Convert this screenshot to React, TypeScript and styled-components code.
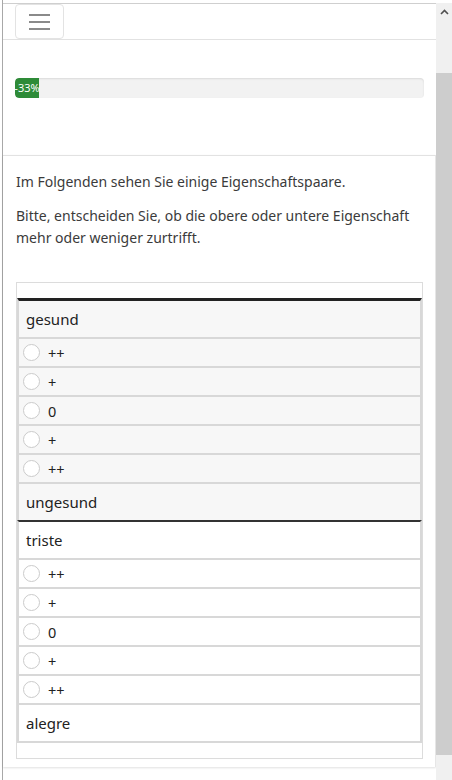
import React from "react";
import styled, { createGlobalStyle } from "styled-components";

const GlobalStyle = createGlobalStyle`
  html, body {
    margin: 0;
    padding: 0;
    background: #fff;
  }
  body {
    font-family: "Noto Sans", "Open Sans", sans-serif;
    color: #333;
  }
`;

const Page = styled.div`
  display: flex;
  height: 780px;
  overflow: hidden;
  padding-left: 2px;
  padding-top: 3px;
  box-sizing: border-box;
`;

const Frame = styled.div`
  flex: 1;
  display: flex;
  border-left: 1px solid #a8a8a8;
  margin-top: -3px;
  padding-top: 3px;
`;

const Main = styled.div`
  flex: 1;
  display: flex;
  flex-direction: column;
  border-top: 1px solid #cfcfcf;
  min-width: 0;
`;

const Header = styled.div`
  height: 35px;
  display: flex;
  align-items: flex-start;
  padding-left: 12px;
  border-bottom: 1px solid #e2e2e2;
`;

const MenuButton = styled.button`
  width: 49px;
  height: 35px;
  margin: 0;
  padding: 0;
  border: 1px solid #e3e3e3;
  border-radius: 4px;
  background: #fff;
  display: flex;
  flex-direction: column;
  align-items: center;
  justify-content: center;
  gap: 5px;
`;

const MenuLine = styled.span`
  display: block;
  width: 21px;
  height: 2px;
  background: #8a8a8a;
`;

const ProgressSection = styled.div`
  height: 115px;
  padding: 38px 12px 0 12px;
  box-sizing: border-box;
`;

const ProgressTrack = styled.div`
  height: 20px;
  background: #f2f2f2;
  border-radius: 4px;
  box-shadow: inset 0 1px 2px rgba(0, 0, 0, 0.1);
  display: flex;
  overflow: hidden;
`;

const ProgressFill = styled.div`
  background: #2e8b38;
  color: #fff;
  font-size: 11px;
  line-height: 20px;
  display: flex;
  justify-content: center;
  white-space: nowrap;
  border-radius: 4px 0 0 4px;
`;

const Card = styled.div`
  flex: 1;
  border-top: 1px solid #e2e2e2;
  border-right: 1px solid #e6e6e6;
  padding: 15px 12px 0 13px;
  margin-bottom: 13px;
  box-shadow: 0 1px 2px rgba(0, 0, 0, 0.12);
`;

const Paragraph = styled.p`
  margin: 0 0 12px 0;
  font-size: 14px;
  line-height: 22px;
  color: #3b3b3b;
`;

const TableBox = styled.div`
  margin-top: 33px;
  border: 1px solid #dcdcdc;
  padding: 15px 0;
`;

const Block = styled.div<{ $top: number; $shaded: boolean; $last?: boolean }>`
  border-top: ${(p) => p.$top}px solid ${(p) => (p.$top > 2 ? "#222" : "#333")};
  border-left: 2px solid #d8d8d8;
  border-right: 2px solid #d8d8d8;
  border-bottom: ${(p) => (p.$last ? "2px solid #d8d8d8" : "none")};
  background: ${(p) => (p.$shaded ? "#f7f7f7" : "#fff")};
`;

const Pole = styled.div<{ $sep?: boolean }>`
  height: 36px;
  display: flex;
  align-items: center;
  padding-left: 7px;
  font-size: 15px;
  color: #222;
  border-bottom: ${(p) => (p.$sep ? "2px solid #d8d8d8" : "none")};
`;

const Option = styled.label`
  height: 27px;
  display: flex;
  align-items: center;
  gap: 8px;
  padding-left: 4px;
  font-size: 14.5px;
  color: #222;
  border-bottom: 2px solid #d8d8d8;
`;

const Radio = styled.span`
  width: 15px;
  height: 15px;
  border: 1px solid #cbcbcb;
  border-radius: 50%;
  background: #fff;
`;

const Scrollbar = styled.div`
  width: 16px;
  display: flex;
  flex-direction: column;
  background: #f0f0f0;
`;

const ScrollArrow = styled.div`
  height: 17px;
  display: flex;
  align-items: center;
  justify-content: center;
`;

const ScrollTrack = styled.div`
  height: 53px;
`;

const ScrollThumb = styled.div`
  height: 682px;
  background: #cdcdcd;
`;

const options = ["++", "+", "0", "+", "++"];

const pairs = [
  { top: "gesund", bottom: "ungesund" },
  { top: "triste", bottom: "alegre" },
];

const App: React.FC = () => {
  return (
    <>
      <GlobalStyle />
      <Page>
        <Frame>
          <Main>
            <Header>
              <MenuButton aria-label="Menü">
                <MenuLine />
                <MenuLine />
                <MenuLine />
              </MenuButton>
            </Header>
            <ProgressSection>
              <ProgressTrack>
                <ProgressFill style={{ width: 24 }}>-33%</ProgressFill>
              </ProgressTrack>
            </ProgressSection>
            <Card>
              <Paragraph>Im Folgenden sehen Sie einige Eigenschaftspaare.</Paragraph>
              <Paragraph>
                Bitte, entscheiden Sie, ob die obere oder untere Eigenschaft mehr oder
                weniger zurtrifft.
              </Paragraph>
              <TableBox>
                {pairs.map((pair, i) => (
                  <Block
                    key={pair.top}
                    $top={i === 0 ? 3 : 2}
                    $shaded={i === 0}
                    $last={i === pairs.length - 1}
                  >
                    <Pole $sep>{pair.top}</Pole>
                    {options.map((o, j) => (
                      <Option key={j}>
                        <Radio />
                        {o}
                      </Option>
                    ))}
                    <Pole>{pair.bottom}</Pole>
                  </Block>
                ))}
              </TableBox>
            </Card>
          </Main>
          <Scrollbar>
            <ScrollArrow>
              <svg width="9" height="6" viewBox="0 0 9 6">
                <path d="M1 5 L4.5 1.5 L8 5" fill="none" stroke="#505050" strokeWidth="1.6" />
              </svg>
            </ScrollArrow>
            <ScrollTrack />
            <ScrollThumb />
          </Scrollbar>
        </Frame>
      </Page>
    </>
  );
};

export default App;
